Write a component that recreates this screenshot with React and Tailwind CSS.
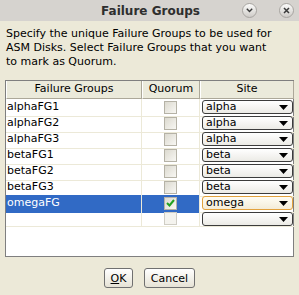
import React from "react";

const rows = [
  { name: "alphaFG1", site: "alpha" },
  { name: "alphaFG2", site: "alpha" },
  { name: "alphaFG3", site: "alpha" },
  { name: "betaFG1", site: "beta" },
  { name: "betaFG2", site: "beta" },
  { name: "betaFG3", site: "beta" },
  { name: "omegaFG", site: "omega", selected: true, checked: true },
  { name: "", site: "", empty: true },
];

function Arrow() {
  return (
    <svg width="9" height="5" viewBox="0 0 9 5" className="shrink-0">
      <path d="M0 0 H9 L4.5 5 Z" fill="#000" />
    </svg>
  );
}

function Combo({ value, selected }) {
  return (
    <div
      className={
        "h-[14px] flex items-center justify-between pl-[3px] pr-[4px] rounded-[3px] border " +
        (selected
          ? "border-[#e3a23c] bg-gradient-to-b from-[#fffdf4] to-[#f3ecd8]"
          : "border-[#3c3c3c] bg-gradient-to-b from-[#ffffff] to-[#ecebe6]")
      }
    >
      <span className="leading-[12px] text-[11px] text-black">{value}</span>
      <Arrow />
    </div>
  );
}

function Check({ checked, faded }) {
  return (
    <div
      className={
        "w-[13px] h-[13px] border flex items-center justify-center " +
        (faded
          ? "border-[#cfcdc4] bg-[#f4f3ee]"
          : "border-[#b5b2a6] bg-gradient-to-br from-[#dcdad0] to-[#f8f7f3]")
      }
    >
      {checked && (
        <svg width="9" height="8" viewBox="0 0 9 8">
          <path d="M1 4 L3.5 6.5 L8 1" stroke="#21a121" strokeWidth="2" fill="none" />
        </svg>
      )}
    </div>
  );
}

export default function App() {
  return (
    <div
      className="w-[299px] h-[295px] bg-[#ece9d8] flex flex-col overflow-hidden text-black"
      style={{ fontFamily: '"DejaVu Sans", sans-serif' }}
    >
      <div className="h-[21px] shrink-0 bg-[#d6d3cf] grid grid-cols-[1fr_auto_1fr] items-center">
        <div />
        <div className="text-[12px] font-bold text-[#2e2e2e] leading-none pl-[2px]">Failure Groups</div>
        <div className="flex justify-end items-center gap-[22px] pr-[5px]">
          <div className="w-[15px] h-[15px] rounded-full border border-[#a8a5a1] bg-gradient-to-b from-[#fbfbfa] to-[#cfccc8] flex items-center justify-center">
            <svg width="7" height="5" viewBox="0 0 7 5">
              <path d="M0.8 0.8 L3.5 3.6 L6.2 0.8" stroke="#3a3a3a" strokeWidth="1.4" fill="none" />
            </svg>
          </div>
          <div className="w-[15px] h-[15px] rounded-full border border-[#a8a5a1] bg-gradient-to-b from-[#fbfbfa] to-[#cfccc8] flex items-center justify-center">
            <svg width="7" height="7" viewBox="0 0 7 7">
              <path d="M1 1 L6 6 M6 1 L1 6" stroke="#3a3a3a" strokeWidth="1.5" fill="none" />
            </svg>
          </div>
        </div>
      </div>

      <div className="px-[6px] pt-[6px] text-[11px] leading-[14px]">
        Specify the unique Failure Groups to be used for
        <br />
        ASM Disks. Select Failure Groups that you want
        <br />
        to mark as Quorum.
      </div>

      <div className="mx-[5px] mt-[11px] h-[177px] border border-[#7f7f7f] bg-white text-[11px] flex flex-col">
        <div className="grid grid-cols-[136px_58px_94px] h-[18px] bg-[#ebeadb]">
          <div className="flex items-center justify-center border-r border-b border-[#aca899] border-l border-l-[#ffffff]">
            Failure Groups
          </div>
          <div className="flex items-center justify-center border-r border-b border-[#aca899] border-l border-l-[#ffffff]">
            Quorum
          </div>
          <div className="flex items-center justify-center border-r border-b border-[#aca899] border-l border-l-[#ffffff]">
            Site
          </div>
        </div>
        {rows.map((r, i) => (
          <div key={i} className="grid grid-cols-[136px_58px_94px] h-[16px]">
            <div
              className={
                "flex items-center pl-[1px] border-r border-b border-[#ece9d8] " +
                (r.selected ? "bg-[#316ac5] text-white border-b-[#316ac5]" : "")
              }
            >
              {r.name}
            </div>
            <div
              className={
                "flex items-center justify-center border-r border-b border-[#ece9d8] " +
                (r.selected ? "bg-[#316ac5] border-b-[#316ac5]" : "")
              }
            >
              <Check checked={r.checked} faded={r.empty} />
            </div>
            <div className="border-b border-[#ece9d8] pl-[2px] pr-[1px] pt-[1px]">
              <Combo value={r.site} selected={r.selected} />
            </div>
          </div>
        ))}
      </div>

      <div className="flex justify-center gap-[11px] mt-[11px]">
        <button className="w-[29px] h-[20px] rounded-[3px] border border-[#707070] bg-gradient-to-b from-[#ffffff] to-[#e6e3d6] text-[11px] leading-none flex items-center justify-center">
          <span><span className="underline">O</span>K</span>
        </button>
        <button className="w-[51px] h-[20px] rounded-[3px] border border-[#707070] bg-gradient-to-b from-[#ffffff] to-[#e6e3d6] text-[11px] leading-none flex items-center justify-center">
          Cancel
        </button>
      </div>
    </div>
  );
}
